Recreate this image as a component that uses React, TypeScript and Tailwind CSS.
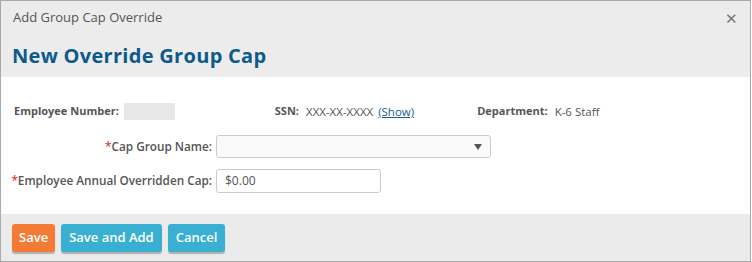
export default function App() {
  return (
    <div className="h-[262px] w-[752px] bg-white font-['Open_Sans',sans-serif]">
      <div className="flex h-[262px] w-[751px] flex-col border border-[#a9a9a9]">
        <div className="bg-[#ececec]">
          <div className="flex h-[34px] items-center justify-between pl-[12px] pr-[12px]">
            <span className="text-[13px] text-[#555]">Add Group Cap Override</span>
            <span className="text-[15px] leading-none text-[#777]">✕</span>
          </div>
          <h1 className="h-[42px] pl-[11px] pt-[6px] text-[20px] font-bold tracking-[0.3px] text-[#0d5a8c]">
            New Override Group Cap
          </h1>
        </div>

        <div className="flex-1 bg-white pt-[26px]">
          <div className="flex items-center text-[11px] text-[#555]">
            <span className="ml-[13px] font-bold">Employee Number:</span>
            <span className="ml-[5px] h-[17px] w-[51px] bg-[#e7e7e9]" />
            <span className="ml-[100px] font-bold">SSN:</span>
            <span className="ml-[7px] text-[11.5px]">XXX-XX-XXXX</span>
            <a className="ml-[5px] text-[11.5px] text-[#1b5b8d] underline">(Show)</a>
            <span className="ml-[63px] font-bold">Department:</span>
            <span className="ml-[7px] text-[11.5px]">K-6 Staff</span>
          </div>

          <div className="mt-[15px] grid grid-cols-[211px_auto] items-center gap-x-[4px] gap-y-[11px] text-[11.75px] text-[#555]">
            <label className="whitespace-nowrap text-right font-semibold">
              <span className="text-[#e23b3b]">*</span>Cap Group Name:
            </label>
            <div className="flex h-[23px] w-[275px] items-center justify-end rounded-[3px] border border-[#ccc] bg-[#fafafa] pr-[8px]">
              <svg width="8" height="6" viewBox="0 0 8 6">
                <path d="M0 0H8L4 6Z" fill="#555" />
              </svg>
            </div>
            <label className="whitespace-nowrap text-right font-semibold">
              <span className="text-[#e23b3b]">*</span>Employee Annual Overridden Cap:
            </label>
            <div className="flex h-[24px] w-[165px] items-center rounded-[3px] border border-[#ccc] bg-white pl-[8px] text-[12px] text-[#555]">
              $0.00
            </div>
          </div>
        </div>

        <div className="flex h-[47px] items-start gap-[6px] bg-[#ebebeb] pl-[11px] pt-[10px]">
          <button className="h-[28px] rounded-[3px] bg-[#f37b36] px-[7px] text-[13px] font-semibold text-white shadow-[0_2px_1px_rgba(0,0,0,0.25)]">
            Save
          </button>
          <button className="h-[28px] rounded-[3px] bg-[#39afd1] px-[8px] text-[13px] font-semibold text-white shadow-[0_2px_1px_rgba(0,0,0,0.25)]">
            Save and Add
          </button>
          <button className="h-[28px] rounded-[3px] bg-[#39afd1] px-[8px] text-[13px] font-semibold text-white shadow-[0_2px_1px_rgba(0,0,0,0.25)]">
            Cancel
          </button>
        </div>
      </div>
    </div>
  );
}
